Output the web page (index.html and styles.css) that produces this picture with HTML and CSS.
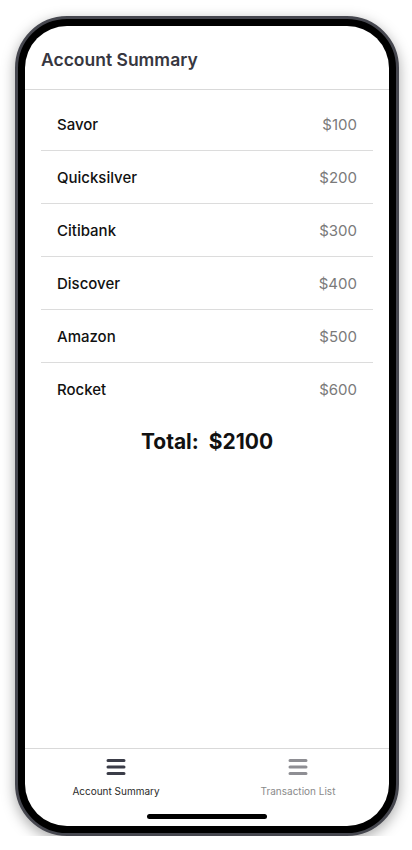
FILE: index.html
```html
<!DOCTYPE html>
<html>
<head>
<meta charset="utf-8">
<link rel="stylesheet" href="styles.css">
</head>
<body>
<div class="phone">
  <div class="screen">
    <header class="header"><h1 class="title">Account Summary</h1></header>
    <main class="content">
      <ul class="list">
        <li class="row"><span class="name">Savor</span><span class="amount">$100</span></li>
        <li class="row"><span class="name">Quicksilver</span><span class="amount">$200</span></li>
        <li class="row"><span class="name">Citibank</span><span class="amount">$300</span></li>
        <li class="row"><span class="name">Discover</span><span class="amount">$400</span></li>
        <li class="row"><span class="name">Amazon</span><span class="amount">$500</span></li>
        <li class="row"><span class="name">Rocket</span><span class="amount">$600</span></li>
      </ul>
      <div class="total">Total:&nbsp; $2100</div>
    </main>
    <nav class="tabbar">
      <div class="tab active">
        <svg class="icon" width="20" height="18" viewBox="0 0 20 18"><path d="M2 2.5h16M2 9h16M2 15.5h16" stroke="currentColor" stroke-width="3" stroke-linecap="round" fill="none"/></svg>
        <span class="label">Account Summary</span>
      </div>
      <div class="tab">
        <svg class="icon" width="20" height="18" viewBox="0 0 20 18"><path d="M2 2.5h16M2 9h16M2 15.5h16" stroke="currentColor" stroke-width="3" stroke-linecap="round" fill="none"/></svg>
        <span class="label">Transaction List</span>
      </div>
    </nav>
    <div class="home-indicator"></div>
  </div>
</div>
</body>
</html>
```
FILE: styles.css
```css
* { box-sizing: border-box; }
html, body { margin: 0; padding: 0; background: #fff; }
body { font-family: Inter, "Noto Sans", "Liberation Sans", sans-serif; }

.phone {
  margin: 16px 0 0 15px;
  width: 384px;
  height: 820px;
  border: 3px solid #46474f;
  background: #000;
  padding: 7px;
  border-radius: 52px;
  box-shadow: 0 4px 14px rgba(0,0,0,0.35);
}

.screen {
  position: relative;
  width: 364px;
  height: 800px;
  background: #fff;
  border-radius: 42px;
  overflow: hidden;
  display: flex;
  flex-direction: column;
}

.header {
  height: 64px;
  border-bottom: 1px solid #d9d9d9;
  display: flex;
  align-items: center;
  padding: 0 16px;
}
.title {
  margin: 0;
  font-size: 17.5px;
  font-weight: 600;
  color: #37373f;
  padding-top: 4px;
}

.content { flex: 1; }

.list {
  list-style: none;
  margin: 0 16px;
  padding: 8px 0 0;
}
.row {
  height: 53px;
  display: flex;
  align-items: center;
  justify-content: space-between;
  padding: 0 16px;
  border-bottom: 1px solid #dcdcdc;
  font-size: 15px;
}
.row:last-child { border-bottom: none; }
.name { color: #111; font-weight: 500; }
.amount { color: #7a7a7a; }

.total {
  text-align: center;
  font-size: 21px;
  font-weight: 700;
  color: #111;
  line-height: 28px;
  margin-top: 12px;
}

.tabbar {
  height: 78px;
  border-top: 1px solid #d9d9d9;
  display: grid;
  grid-template-columns: 1fr 1fr;
}
.tab {
  display: flex;
  flex-direction: column;
  align-items: center;
  padding-top: 9px;
  color: #8e8e93;
}
.tab.active { color: #3b3d48; }
.icon { display: block; }
.label {
  margin-top: 9px;
  font-size: 10px;
  color: #8a8a8a;
}
.tab.active .label { color: #2a2a2a; }

.home-indicator {
  position: absolute;
  left: 122px;
  bottom: 7px;
  width: 120px;
  height: 5px;
  border-radius: 3px;
  background: #000;
}
```
